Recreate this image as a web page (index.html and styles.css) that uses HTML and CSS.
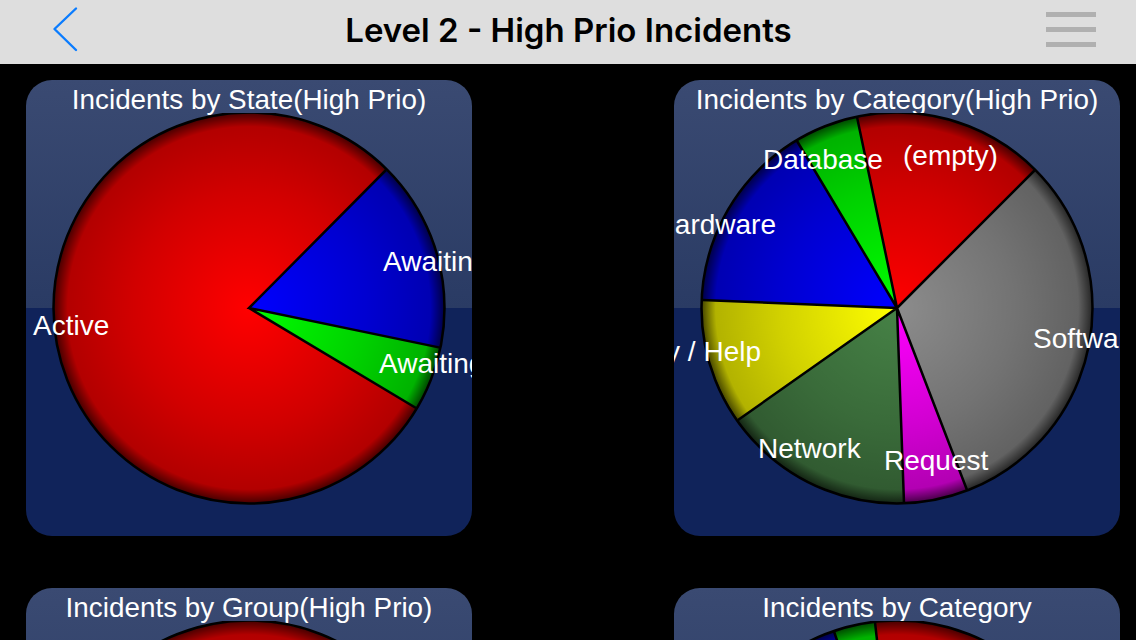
FILE: index.html
```html
<!DOCTYPE html>
<html lang="en">
<head>
    <meta charset="UTF-8">
    <title>Level 2 - High Prio Incidents</title>
    <link rel="stylesheet" href="styles.css">
</head>
<body>
    <header class="nav-bar">
        <svg class="back-icon" width="26" height="46" viewBox="0 0 26 46">
            <path d="M24 2.500 L2.500 23 L24 44" fill="none" stroke="#0a7cff" stroke-width="2.400" stroke-linecap="round" stroke-linejoin="round"/>
        </svg>
        <h1 class="nav-title">Level 2 - High Prio Incidents</h1>
        <div class="menu-icon">
            <span class="menu-bar"></span>
            <span class="menu-bar"></span>
            <span class="menu-bar"></span>
        </div>
    </header>

    <main class="dashboard">
        <section class="card">
            <h2 class="card-title">Incidents by State(High Prio)</h2>
            <svg class="pie" viewBox="-223 -195 446 423">
                <defs>
                    <radialGradient id="shade" gradientUnits="userSpaceOnUse" cx="0" cy="0" r="195">
                        <stop offset="0" stop-color="#000" stop-opacity="0"/>
                        <stop offset="0.6" stop-color="#000" stop-opacity="0.18"/>
                        <stop offset="0.93" stop-color="#000" stop-opacity="0.3"/>
                        <stop offset="1" stop-color="#000" stop-opacity="0.72"/>
                    </radialGradient>
                </defs>
                <path class="slice red" d="M0 0 L167 100 A195 195 0 1 1 137 -138 Z"/>
                <path class="slice blue" d="M0 0 L137 -138 A195 195 0 0 1 191 39.600 Z"/>
                <path class="slice green" d="M0 0 L191 39.600 A195 195 0 0 1 167 100 Z"/>
                <circle class="pie-shade" r="195" fill="url(#shade)"/>
                <path class="slice-line" d="M137 -138 L0 0 L191 39.600 M0 0 L167 100"/>
                <circle class="pie-rim" r="195.500"/>
                <text class="pie-label" x="-216" y="27">Active</text>
                <text class="pie-label" x="134" y="-37">Awaiting User</text>
                <text class="pie-label" x="130" y="65">Awaiting Vendor</text>
            </svg>
        </section>

        <section class="card">
            <h2 class="card-title">Incidents by Category(High Prio)</h2>
            <svg class="pie" viewBox="-223 -195 446 423">
                <path class="slice red" d="M0 0 L-40 -191 A195 195 0 0 1 138 -138 Z"/>
                <path class="slice gray" d="M0 0 L138 -138 A195 195 0 0 1 70 182 Z"/>
                <path class="slice magenta" d="M0 0 L70 182 A195 195 0 0 1 7 195 Z"/>
                <path class="slice moss" d="M0 0 L7 195 A195 195 0 0 1 -159 112 Z"/>
                <path class="slice yellow" d="M0 0 L-159 112 A195 195 0 0 1 -195 -8 Z"/>
                <path class="slice blue" d="M0 0 L-195 -8 A195 195 0 0 1 -100 -167 Z"/>
                <path class="slice green" d="M0 0 L-100 -167 A195 195 0 0 1 -40 -191 Z"/>
                <circle class="pie-shade" r="195" fill="url(#shade)"/>
                <path class="slice-line" d="M0 0 L-40 -191 M0 0 L138 -138 M0 0 L70 182 M0 0 L7 195 M0 0 L-159 112 M0 0 L-195 -8 M0 0 L-100 -167"/>
                <circle class="pie-rim" r="195.500"/>
                <text class="pie-label" x="-134" y="-139">Database</text>
                <text class="pie-label" x="6" y="-143">(empty)</text>
                <text class="pie-label end" x="-121" y="-74">Hardware</text>
                <text class="pie-label" x="136" y="40">Software</text>
                <text class="pie-label end" x="-136" y="53">Inquiry / Help</text>
                <text class="pie-label" x="-139" y="150">Network</text>
                <text class="pie-label" x="-13" y="162">Request</text>
            </svg>
        </section>

        <section class="card">
            <h2 class="card-title">Incidents by Group(High Prio)</h2>
            <svg class="pie" viewBox="-223 -195 446 423">
                <circle class="slice red" r="195"/>
                <circle class="pie-shade" r="195" fill="url(#shade)"/>
                <circle class="pie-rim" r="195.500"/>
            </svg>
        </section>

        <section class="card">
            <h2 class="card-title">Incidents by Category</h2>
            <svg class="pie" viewBox="-223 -195 446 423">
                <circle class="slice red" r="195"/>
                <path class="slice blue" d="M0 0 L-138 -138 A195 195 0 0 1 -63 -184.500 Z"/>
                <path class="slice green" d="M0 0 L-63 -184.500 A195 195 0 0 1 -22 -193.700 Z"/>
                <circle class="pie-shade" r="195" fill="url(#shade)"/>
                <path class="slice-line" d="M0 0 L-138 -138 M0 0 L-63 -184.500 M0 0 L-22 -193.700"/>
                <circle class="pie-rim" r="195.500"/>
            </svg>
        </section>
    </main>
</body>
</html>
```

FILE: styles.css
```css
html, body {
    height: 100%;
    overflow: hidden;
}
body {
    margin: 0;
    background-color: #000000;
    color: #ffffff;
    font-family: "Liberation Sans", Arial, sans-serif;
}
.nav-bar {
    height: 64px;
    background-color: #dedede;
    display: flex;
    align-items: center;
    justify-content: space-between;
    padding: 0 40px 0 52px;
}
.back-icon {
    display: block;
    margin: -6px 13px 0 0;
}
.nav-title {
    margin: 0 0 5px;
    color: #000000;
    font-family: Inter, "Liberation Sans", sans-serif;
    font-size: 33px;
    font-weight: 600;
}
.menu-icon {
    width: 50px;
    display: flex;
    flex-direction: column;
    gap: 10px;
    margin-top: -6px;
}
.menu-bar {
    height: 5px;
    background-color: #b0b0b0;
}
.dashboard {
    display: grid;
    grid-template-columns: 446px 446px;
    grid-auto-rows: 456px;
    column-gap: 202px;
    row-gap: 52px;
    padding: 16px 0 0 26px;
}
.card {
    border-radius: 26px;
    overflow: hidden;
    background: linear-gradient(#3a4a72 0%, #2a3b64 50%, #10235a 50%, #10235a 100%);
}
.card-title {
    margin: 0;
    height: 33px;
    line-height: 40px;
    text-align: center;
    font-size: 27.850px;
    font-weight: 400;
    white-space: nowrap;
}
.pie {
    display: block;
    width: 446px;
    height: 423px;
}
.slice {
    stroke: none;
}
.red { fill: #ff0000; }
.blue { fill: #0000ff; }
.green { fill: #00ff00; }
.gray { fill: #8c8c8c; }
.magenta { fill: #ff00ff; }
.moss { fill: #468246; }
.yellow { fill: #ffff00; }
.slice-line {
    fill: none;
    stroke: #000000;
    stroke-width: 2.500;
}
.pie-rim {
    fill: none;
    stroke: #000000;
    stroke-width: 2.500;
}
.pie-label {
    fill: #ffffff;
    font-size: 28px;
}
.end {
    text-anchor: end;
}
```
